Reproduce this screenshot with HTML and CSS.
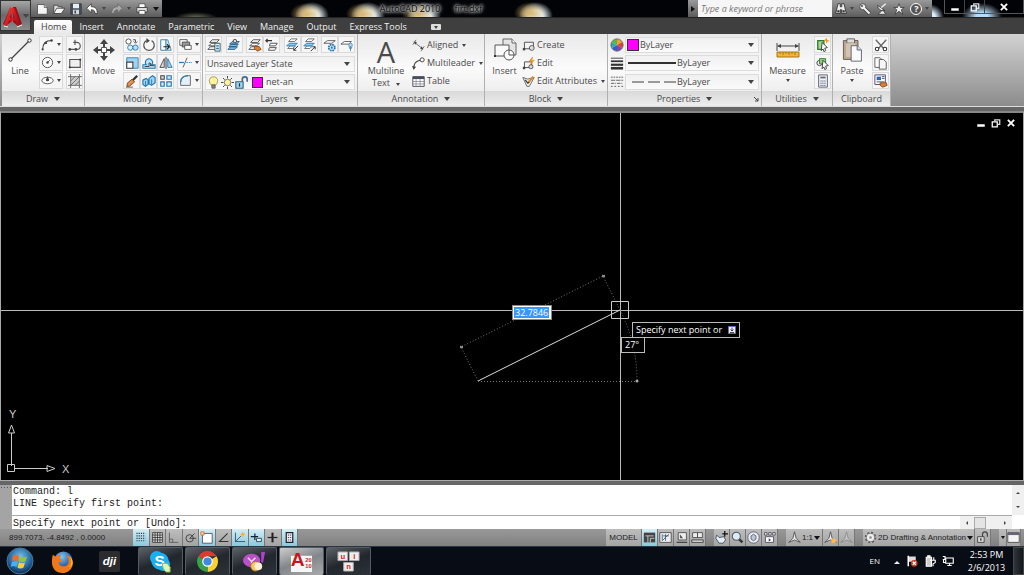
FILE: index.html
```html
<!DOCTYPE html>
<html lang="en">
<head>
    <meta charset="UTF-8">
    <meta name="viewport" content="width=device-width, initial-scale=1.0">
    <title>AutoCAD 2010 - firt.dxf</title>
    <link rel="stylesheet" href="styles.css">
</head>
<body>
    <!-- Shared icons -->
    <svg class="sprite" aria-hidden="true">
        <defs>
            <linearGradient id="red" x1="0" y1="0" x2="1" y2="1"><stop offset="0" stop-color="#ff5a50"/><stop offset=".5" stop-color="#d81820"/><stop offset="1" stop-color="#8c0a10"/></linearGradient>
            <radialGradient id="orb" cx=".5" cy=".35" r=".65"><stop offset="0" stop-color="#7cc4ea"/><stop offset=".6" stop-color="#2a6ea8"/><stop offset="1" stop-color="#0c2c54"/></radialGradient>
            <radialGradient id="globe" cx=".4" cy=".3" r=".7"><stop offset="0" stop-color="#7cc8f4"/><stop offset="1" stop-color="#123a88"/></radialGradient>
        </defs>
        <symbol id="i-new" viewBox="0 0 16 16"><path d="M2 2h9l4 4v9H2z" fill="#f4f4f4" stroke="#444"/><path d="M11 2v4h4" fill="#ccc" stroke="#555"/></symbol>
        <symbol id="i-open" viewBox="0 0 16 16"><path d="M1 13V3h5l1 2h5v3" fill="#ddd" stroke="#333"/><path d="M1 14l4-7h11l-5 7z" fill="#f4f4f4" stroke="#333"/></symbol>
        <symbol id="i-save" viewBox="0 0 16 16"><path d="M1 1h14v14H1z" fill="#46505c" stroke="#30363e"/><path d="M4 1h8v6H4z" fill="#e8edf2"/><path d="M4 9h8v6H4z" fill="#cfd6de"/><path d="M6 10h2v4H6z" fill="#444"/></symbol>
        <symbol id="i-undo" viewBox="0 0 16 16"><path d="M1 7l6-6v4c6 0 8 3 8 9h-3c0-3-1-5-5-5v4z" fill="#fff" stroke="#333"/></symbol>
        <symbol id="i-redo" viewBox="0 0 16 16"><path d="M15 7l-6-6v4c-6 0-8 3-8 9h3c0-3 1-5 5-5v4z" fill="#aaa" stroke="#666"/></symbol>
        <symbol id="i-print" viewBox="0 0 16 16"><path d="M4 1h8v5H4z" fill="#fff" stroke="#444"/><path d="M1 6h14v6H1z" fill="#ddd" stroke="#333"/><path d="M4 10h8v5H4z" fill="#fff" stroke="#444"/></symbol>
        <symbol id="i-bino" viewBox="0 0 16 16"><path d="M4 1h3v4h2V1h3l3 13H9V9H7v5H1z" fill="#eee" stroke="#222"/><path d="M3 11h3M10 11h3" stroke="#333" stroke-width="3"/></symbol>
        <symbol id="i-key" viewBox="0 0 16 16"><path d="M6 6l8 8" stroke="#333" stroke-width="5"/><circle cx="5" cy="5" r="4" fill="#eee" stroke="#333"/><path d="M6 6l8 8" stroke="#eee" stroke-width="3"/><circle cx="4" cy="4" r="1.400" fill="#555"/></symbol>
        <symbol id="i-dish" viewBox="0 0 16 16"><path d="M2 3c1 6 5 8 10 7zM3 15h10l-4-6z" fill="#eee" stroke="#333"/><path d="M7 6l6-5" stroke="#eee" stroke-width="2"/></symbol>
        <symbol id="i-star" viewBox="0 0 16 16"><path d="M8 1l2 5h5l-4 3 2 6-5-4-5 4 2-6-4-3h5z" fill="#eee" stroke="#333"/></symbol>
        <symbol id="i-min" viewBox="0 0 16 16"><path d="M2 12h12" stroke="#fff" stroke-width="4"/></symbol>
        <symbol id="i-restore" viewBox="0 0 16 16"><path d="M6 5V3h8v7h-3" fill="none" stroke="#ddd" stroke-width="2"/><path d="M2 6h8v8H2z" fill="none" stroke="#fff" stroke-width="2"/></symbol>
        <symbol id="i-close" viewBox="0 0 16 16"><path d="M3 3l10 10M13 3L3 13" stroke="#fff" stroke-width="3"/></symbol>

        <symbol id="i-line" viewBox="0 0 24 24"><path d="M3 21L21 3" stroke="#444" stroke-width="1.200"/><circle cx="2.500" cy="21.500" r="1.700" fill="#fff" stroke="#333"/><circle cx="21.500" cy="2.500" r="1.700" fill="#fff" stroke="#333"/></symbol>
        <symbol id="i-arc" viewBox="0 0 16 16"><path d="M2 14C2 7 6 3 13 3" fill="none" stroke="#444" stroke-width="1.300"/><circle cx="2" cy="14" r="1.300" fill="#444"/><circle cx="6" cy="6" r="1.500" fill="#444"/><circle cx="13" cy="3" r="1.500" fill="#444"/></symbol>
        <symbol id="i-circle" viewBox="0 0 16 16"><circle cx="8" cy="8" r="6.300" fill="#fff" stroke="#555" stroke-width="1.200"/><path d="M8 8l3-3" stroke="#444"/><circle cx="8" cy="8" r="1.500" fill="#444"/></symbol>
        <symbol id="i-ellipse" viewBox="0 0 16 16"><ellipse cx="8" cy="8" rx="7" ry="4" fill="#fff" stroke="#555" stroke-width="1.200"/><circle cx="8" cy="7" r="2" fill="#444"/><path d="M8 3v3" stroke="#444"/></symbol>
        <symbol id="i-pline" viewBox="0 0 16 16"><path d="M1 13h9a4 4 0 0 0 0-8H6" fill="none" stroke="#555" stroke-width="1.300"/><path d="M8 2v6" stroke="#555" stroke-width="1.300"/><circle cx="2" cy="13" r="1.500" fill="#444"/><circle cx="9" cy="13" r="1.500" fill="#444"/></symbol>
        <symbol id="i-rect" viewBox="0 0 16 16"><path d="M2 4h12v9H2z" fill="#eee" stroke="#555" stroke-width="1.300"/><path d="M1 12h2v2H1zM13 3h2v2h-2z" fill="#333"/></symbol>
        <symbol id="i-hatch" viewBox="0 0 16 16"><path d="M3 3h10v10H3z" fill="#ccc"/><path d="M3 0v16M13 0v16M0 3h16M0 13h16M3 8l5-5M3 13L13 3M8 13l5-5" stroke="#666"/></symbol>
        <symbol id="i-move" viewBox="0 0 24 24"><path d="M12 1l4 5h-3v3h-2V6H8zM12 23l4-5h-3v-3h-2v3H8zM1 12l5-4v3h3v2H6v3zM23 12l-5-4v3h-3v2h3v3z" fill="#444"/><path d="M9.500 9.500h5v5h-5z" fill="#fff" stroke="#555"/></symbol>
        <symbol id="i-copy2" viewBox="0 0 16 16"><circle cx="4" cy="4" r="3" fill="#fff" stroke="#444"/><circle cx="6" cy="11" r="3" fill="#def" stroke="#27a"/><circle cx="12" cy="11" r="3" fill="#bdf" stroke="#27a"/><path d="M9 2h3v3M14 4l-2 2-2-2" fill="none" stroke="#444"/></symbol>
        <symbol id="i-rotate" viewBox="0 0 16 16"><path d="M11 3a6 6 0 1 1-6 0" fill="none" stroke="#555" stroke-width="1.400"/><path d="M5 0l4 3-4 3z" fill="#444"/></symbol>
        <symbol id="i-stretch" viewBox="0 0 16 16"><path d="M2 2h6v12H2z" fill="#fff" stroke="#27a"/><path d="M8 2h2l4 12H8z" fill="#cfeaf8" stroke="#48a"/><path d="M5 10h6M9 7l3 3-3 3" fill="none" stroke="#222" stroke-width="1.300"/></symbol>
        <symbol id="i-scale" viewBox="0 0 16 16"><path d="M2 2h13v12H2z" fill="#9fd4f2" stroke="#2f7eb0"/><path d="M2 7h7v7H2z" fill="#fff" stroke="#444" stroke-width="1.300"/></symbol>
        <symbol id="i-offset" viewBox="0 0 16 16"><path d="M1 14v-4h4a4 4 0 1 1 6 0h4v4z" fill="#bfe3f8" stroke="#27a" stroke-width="1.200"/><path d="M3 12h5V8a1.500 1.500 0 1 1 1 3h5" fill="none" stroke="#333"/></symbol>
        <symbol id="i-mirror" viewBox="0 0 16 16"><path d="M1 13L6 3v10z" fill="#ddd" stroke="#444"/><path d="M15 13L10 3v10z" fill="#9fd4f2" stroke="#27a"/><path d="M8 1v14" stroke="#222"/></symbol>
        <symbol id="i-erase" viewBox="0 0 16 16"><path d="M14 2L7 9" stroke="#333" stroke-width="2.500"/><path d="M8 6l3 3-6 5H2l1-4z" fill="#e09050" stroke="#7a4420"/><path d="M1 15h8" stroke="#555"/></symbol>
        <symbol id="i-explode" viewBox="0 0 16 16"><path d="M1 7l4-2 2 2v5l-3 2-3-2zM8 5l4-3 3 2v6l-4 3-3-2z" fill="#9fd4f2" stroke="#27a" stroke-width="1.300"/><path d="M11 6v6M4 8v5" stroke="#27a"/></symbol>
        <symbol id="i-array" viewBox="0 0 16 16"><path d="M2 2h4v4H2z" fill="#ddd" stroke="#444" stroke-width="1.200"/><path d="M9 2h5v4H9zM2 9h4v5H2zM9 9h5v5H9z" fill="#cfeaf8" stroke="#2878b0" stroke-width="1.300"/></symbol>
        <symbol id="i-order" viewBox="0 0 16 16"><path d="M1 2h9v7H1z" fill="#fff" stroke="#444"/><path d="M4 5h9v6H4z" fill="#999" stroke="#444"/><path d="M7 9h8v5H7z" fill="#fff" stroke="#444"/></symbol>
        <symbol id="i-trim" viewBox="0 0 16 16"><path d="M0 8h6" stroke="#2878b0" stroke-width="1.500"/><path d="M9 8h7" stroke="#2878b0" stroke-dasharray="2 1"/><path d="M10 2L5 14" stroke="#444"/></symbol>
        <symbol id="i-fillet" viewBox="0 0 16 16"><path d="M2 14V10C2 5 6 2 14 2v12z" fill="#e4f0f6" stroke="#555"/><path d="M2 10C2 5 6 2 11 2" fill="none" stroke="#2878b0" stroke-width="1.600"/></symbol>

        <symbol id="i-lay" viewBox="0 0 16 16"><path d="M3 5l3-3h8l-3 3zM2 9l3-3h8l-3 3zM1 13l3-3h8l-3 3z" fill="#fff" stroke="#444"/></symbol>
        <symbol id="i-lay-blue" viewBox="0 0 16 16"><path d="M3 7l3-3h8l-3 3zM2 10l3-3h8l-3 3zM1 13l3-3h8l-3 3z" fill="#7cc0ea" stroke="#2a5a80"/><circle cx="9" cy="3.500" r="2" fill="#ddd" stroke="#444"/></symbol>
        <symbol id="i-lay-prop" viewBox="0 0 16 16"><use href="#i-lay"/><path d="M9 6h6v9H9z" fill="#e8f4fb" stroke="#355"/><path d="M10.500 9h3M10.500 12h3" stroke="#27a" stroke-width="1.500"/></symbol>
        <symbol id="i-lay-match" viewBox="0 0 16 16"><use href="#i-lay"/><path d="M8 9l5 1 2 3-4 2-4-3z" fill="#d8803c" stroke="#8a4a18"/></symbol>
        <symbol id="i-lay-prev" viewBox="0 0 16 16"><path d="M6 6h8l-2 3H5zM5 11h8l-2 3H4z" fill="#fff" stroke="#444"/><path d="M1 3h7M3 1L1 3l2 2" fill="none" stroke="#333" stroke-width="1.300"/></symbol>
        <symbol id="i-lay-iso" viewBox="0 0 16 16"><path d="M4 4l3-3h7l-3 3zM3 12l3-3h6l-3 3z" fill="#fff" stroke="#666"/><path d="M2 9l3-3h9l-3 3z" fill="#8ccbf0" stroke="#2878b0"/><path d="M15 9l-5 5M10 11v3h3" fill="none" stroke="#222"/></symbol>
        <symbol id="i-lay-uniso" viewBox="0 0 16 16"><path d="M4 4l3-3h7l-3 3zM3 12l3-3h6l-3 3z" fill="#fff" stroke="#666"/><path d="M2 9l3-3h9l-3 3z" fill="#8ccbf0" stroke="#2878b0"/><path d="M10 15l5-5M12 10h3v3" fill="none" stroke="#222"/></symbol>
        <symbol id="i-lay-freeze" viewBox="0 0 16 16"><path d="M1 6l4-3h9l-4 3z" fill="#fff" stroke="#555"/><circle cx="10" cy="11" r="3.500" fill="#cfeaf8" stroke="#2878b0" stroke-width="2" stroke-dasharray="2 .75"/><circle cx="10" cy="11" r="1.200" fill="#2878b0"/></symbol>
        <symbol id="i-lay-off" viewBox="0 0 16 16"><path d="M1 7l4-3h8l-3 3z" fill="#fff" stroke="#555"/><path d="M12 15V9M10 8a2 2 0 1 1 4 0l-1 4h-2z" fill="#bfe3f8" stroke="#4a88b8"/></symbol>
        <symbol id="i-bulb" viewBox="0 0 16 16"><path d="M5 11C1 6 3 1 8 1s7 5 3 10z" fill="#fff3a0" stroke="#9a8a40"/><path d="M6 11h4v4H6z" fill="#888" stroke="#555"/></symbol>
        <symbol id="i-sun" viewBox="0 0 16 16"><path d="M8 0v3M8 13v3M0 8h3M13 8h3M2.500 2.500l2 2M11.500 11.500l2 2M13.500 2.500l-2 2M2.500 13.500l2-2" stroke="#444" stroke-width="1.200"/><circle cx="8" cy="8" r="4" fill="#fff3a0" stroke="#666"/></symbol>
        <symbol id="i-lock" viewBox="0 0 16 16"><path d="M1 7h9v8H1z" fill="#9ed4ee" stroke="#2a6080" stroke-width="1.300"/><path d="M9 7V4a3 3 0 0 1 6 0v3" fill="none" stroke="#3b6f90" stroke-width="2"/><path d="M5.500 9v4" stroke="#234" stroke-width="1.500"/></symbol>
        <symbol id="i-aligned" viewBox="0 0 16 16"><path d="M3 4l10 8M1 7l4-6M11 15l4-6" stroke="#555" fill="none"/><path d="M2 3l4 1-2 3zM14 13l-4-1 2-3z" fill="#444"/></symbol>
        <symbol id="i-mleader" viewBox="0 0 16 16"><path d="M2 14C2 8 5 5 10 4" fill="none" stroke="#444" stroke-width="1.300"/><path d="M0 11l2 5 3-4z" fill="#444"/><circle cx="12.500" cy="3.500" r="2.500" fill="#fff" stroke="#444" stroke-width="1.200"/></symbol>
        <symbol id="i-table" viewBox="0 0 16 16"><path d="M1 2h14v12H1z" fill="#fff" stroke="#334"/><path d="M1 2h14v3H1z" fill="#46505c"/><path d="M1 8h14M1 11h14M5 5v9M10 5v9" stroke="#889"/></symbol>
        <symbol id="i-insert" viewBox="0 0 24 24"><path d="M10 1h9l4 4v12H10z" fill="#e4e4e4" stroke="#666"/><path d="M19 1v4h4" fill="#fff" stroke="#666"/><path d="M2 7h14v11H2z" fill="#fafafa" stroke="#555"/><circle cx="16" cy="17" r="5" fill="#fff" stroke="#555"/><path d="M16 12v5h5" stroke="#555" fill="none"/><path d="M1 17h2v2H1z" fill="#333"/></symbol>
        <symbol id="i-create" viewBox="0 0 16 16"><path d="M3 4h11v8H3z" fill="#f4f4f4" stroke="#555" stroke-width="1.200"/><circle cx="12" cy="11" r="3" fill="#ddd" stroke="#444"/><path d="M1 11h3v3H1z" fill="#444"/></symbol>
        <symbol id="i-edit" viewBox="0 0 16 16"><path d="M3 6h9v7H3z" fill="#f4f4f4" stroke="#555" stroke-width="1.200"/><circle cx="11" cy="12" r="2.500" fill="#ddd" stroke="#444"/><path d="M1 12h3v3H1z" fill="#444"/><path d="M13 0l-4 5h3l-2 5 5-6h-3z" fill="#ffb020" stroke="#d07010" stroke-width=".6"/></symbol>
        <symbol id="i-attr" viewBox="0 0 16 16"><path d="M1 3l6 2 8-2-6 11H6z" fill="#eee" stroke="#555"/><path d="M14 2L7 10" stroke="#d88828" stroke-width="2.500"/><path d="M4 6l3 4 2-1" fill="none" stroke="#333" stroke-width="1.400"/></symbol>
        <symbol id="i-wheel" viewBox="0 0 16 16"><path d="M8 8V1a7 7 0 0 1 6 3.500z" fill="#f0a030"/><path d="M8 8l6-3.500a7 7 0 0 1 0 7z" fill="#e04030"/><path d="M8 8l6 3.500A7 7 0 0 1 8 15z" fill="#8a40b0"/><path d="M8 8v7a7 7 0 0 1-6-3.500z" fill="#3060d0"/><path d="M8 8l-6 3.500a7 7 0 0 1 0-7z" fill="#30a8b0"/><path d="M8 8L2 4.500A7 7 0 0 1 8 1z" fill="#58b840"/><circle cx="8" cy="8" r="7" fill="none" stroke="#666"/></symbol>
        <symbol id="i-weight" viewBox="0 0 16 16"><path d="M1 2.500h14" stroke="#333"/><path d="M1 6h14" stroke="#333" stroke-width="2"/><path d="M1 10h14" stroke="#333" stroke-width="2.500"/><path d="M1 14h14" stroke="#333" stroke-width="3"/></symbol>
        <symbol id="i-ltype" viewBox="0 0 16 16"><path d="M1 2.500h14" stroke="#555" stroke-dasharray="2 1"/><path d="M1 6h14" stroke="#555" stroke-dasharray="5 1"/><path d="M1 9.500h14" stroke="#555" stroke-dasharray="4 1 1 1"/><path d="M1 13h14" stroke="#555" stroke-dasharray="2 2"/></symbol>
        <symbol id="i-measure" viewBox="0 0 24 16"><path d="M1 1v8M23 1v8M2 4h20" stroke="#444"/><path d="M1 4l4-2v4zM23 4l-4-2v4z" fill="#444"/><path d="M1 10h22v5H1z" fill="#f2b632" stroke="#a87818"/><path d="M4 10v2M7 10v3M10 10v2M13 10v3M16 10v2M19 10v3" stroke="#a87818"/></symbol>
        <symbol id="i-qselect" viewBox="0 0 16 16"><path d="M2 3h7v10H2z" fill="#a4d890" stroke="#2c7a2c" stroke-width="1.500"/><path d="M7 5l6 6-3 .5 1 3-2 1-1-3-2 2z" fill="#fff" stroke="#333"/><path d="M12 0v6M9 3h6M10 1l4 4" stroke="#f09020"/></symbol>
        <symbol id="i-select" viewBox="0 0 16 16"><circle cx="4" cy="8" r="3" fill="none" stroke="#333"/><path d="M4 3h7v6H4z" fill="#90cc80" stroke="#2c7a2c"/><path d="M8 5l6 6-3 .5 1 3-2 1-1-3-2 2z" fill="#fff" stroke="#333"/></symbol>
        <symbol id="i-calc" viewBox="0 0 16 16"><path d="M3 1h10v14H3z" fill="#eef2f6" stroke="#556"/><path d="M5 3h6v2H5z" fill="#667"/><path d="M5 8h6M5 10.500h6M5 13h6" stroke="#556" stroke-dasharray="1.500 .7"/></symbol>
        <symbol id="i-paste" viewBox="0 0 24 28"><path d="M2 3h17v22H2z" fill="#b9a78e" stroke="#5d5144"/><path d="M6 1h9v5H6z" fill="#ddd" stroke="#555"/><path d="M5 6h11v16H5z" fill="#d2c5b0"/><path d="M11 9h7l5 5v13H11z" fill="#f8fafc" stroke="#556"/><path d="M18 9v5h5" fill="#c8dcea" stroke="#556"/></symbol>
        <symbol id="i-cut" viewBox="0 0 16 16"><path d="M2 2l9 10M14 2L5 12" stroke="#666" stroke-width="1.500"/><circle cx="3.500" cy="12.500" r="2" fill="#fff" stroke="#333" stroke-width="1.200"/><circle cx="12.500" cy="12.500" r="2" fill="#fff" stroke="#333" stroke-width="1.200"/></symbol>
        <symbol id="i-copy" viewBox="0 0 16 16"><path d="M1 2h6l3 3v8H1z" fill="#fff" stroke="#555"/><path d="M6 4h5l3 3v8H6z" fill="#f6f6f6" stroke="#555"/></symbol>
        <symbol id="i-matchp" viewBox="0 0 16 16"><path d="M1 1h12v11H1z" fill="#fff" stroke="#446"/><path d="M3 3h5v4H3z" fill="#2f68b8"/><path d="M9 3h3M9 5h3M3 9h9" stroke="#446"/><path d="M7 10l7 0 1 3-5 2-3-2z" fill="#d8803c" stroke="#8a4a18"/></symbol>

        <symbol id="s-snap" viewBox="0 0 16 16"><path d="M3 3h11M3 6h11M3 9h11M3 12h11" stroke="#345" stroke-width="1.500" stroke-dasharray="1.500 1.200"/></symbol>
        <symbol id="s-grid" viewBox="0 0 16 16"><path d="M2 2h12v12H2z" fill="#ddd" stroke="#333"/><path d="M5 2v12M8 2v12M11 2v12M2 5h12M2 8h12M2 11h12" stroke="#333"/></symbol>
        <symbol id="s-ortho" viewBox="0 0 16 16"><path d="M3 2v12h11M3 10h4v4" fill="none" stroke="#555"/></symbol>
        <symbol id="s-polar" viewBox="0 0 16 16"><circle cx="7" cy="9" r="4.500" fill="none" stroke="#333"/><path d="M7 9h8M7 9l6-6" stroke="#333"/></symbol>
        <symbol id="s-osnap" viewBox="0 0 16 16"><path d="M3 3h12v12H3z" fill="#fff" stroke="#445"/><path d="M1 1h4v4H1z" fill="#f8d0b0" stroke="#d07030"/></symbol>
        <symbol id="s-otrack" viewBox="0 0 16 16"><path d="M13 3L3 13h11" fill="none" stroke="#333" stroke-width="1.300"/></symbol>
        <symbol id="s-ducs" viewBox="0 0 16 16"><path d="M3 2v11h12M3 13l7-7" fill="none" stroke="#246"/><path d="M13 0l-4 5h3l-1 4 4-6h-3z" fill="#ffa820"/></symbol>
        <symbol id="s-dyn" viewBox="0 0 16 16"><path d="M6 3v8M1 7h9" stroke="#123" stroke-width="1.500"/><path d="M8 9h6v4H8z" fill="#def" stroke="#234"/></symbol>
        <symbol id="s-lwt" viewBox="0 0 16 16"><path d="M8 2v12" stroke="#222" stroke-width="2.500"/><path d="M2 8h12" stroke="#222" stroke-width="1.500"/></symbol>
        <symbol id="s-qp" viewBox="0 0 16 16"><path d="M4 2h8v12H4z" fill="#eef" stroke="#222" stroke-width="1.500"/><path d="M6 5h4M6 8h4M6 11h4" stroke="#222" stroke-dasharray="1.500 1"/></symbol>
        <symbol id="s-model" viewBox="0 0 16 16"><path d="M1 2h14v12H1z" fill="#444"/><path d="M3 6h10M6 14V6M9 14V9h5" fill="none" stroke="#ddd"/></symbol>
        <symbol id="s-layout" viewBox="0 0 16 16"><path d="M1 2h14v12H1z" fill="#eee" stroke="#444"/><path d="M4 4v8l8-8M5 6h7M8 4v8" stroke="#357" fill="none"/></symbol>
        <symbol id="s-qvl" viewBox="0 0 16 16"><path d="M4 2h10v9H4z" fill="#eee" stroke="#444"/><path d="M6 4l4 5H6z" fill="#555"/><path d="M2 14h13" stroke="#444" stroke-width="1.500"/></symbol>
        <symbol id="s-qvd" viewBox="0 0 16 16"><path d="M2 2h6v6H2zM8 2h6v6H8z" fill="#eee" stroke="#444"/><path d="M1 11h14v3H1z" fill="#ddd" stroke="#333"/></symbol>
        <symbol id="s-pan" viewBox="0 0 16 16"><path d="M2 5l3 3 6-1 2 4-3 4H5L1 9z" fill="#e6ecf2" stroke="#345"/><path d="M12 0v7M9 3.500h7" stroke="#111" stroke-width="1.500"/></symbol>
        <symbol id="s-zoom" viewBox="0 0 16 16"><path d="M9 9l5 5" stroke="#333" stroke-width="3"/><circle cx="6.500" cy="6.500" r="5" fill="#d8eef4" stroke="#556" stroke-width="1.300"/></symbol>
        <symbol id="s-steer" viewBox="0 0 16 16"><circle cx="8" cy="8" r="7" fill="#e8eef4" stroke="#556"/><path d="M5 6l3-2 3 2v4l-3 2-3-2z" fill="#bcc8d4" stroke="#556"/></symbol>
        <symbol id="s-motion" viewBox="0 0 16 16"><path d="M2 2h3v3H2zM7 2h3v3H7zM12 2h3v3h-3z" fill="#fff" stroke="#445"/><path d="M3 7h10v7H3z" fill="#fff" stroke="#445"/><path d="M7 9l3 2-3 2z" fill="#445"/></symbol>
        <symbol id="s-annot" viewBox="0 0 16 16"><path d="M8 1l2 8 5 5-7-3-7 3 5-5z" fill="#eee" stroke="#444"/></symbol>
        <symbol id="s-annot2" viewBox="0 0 16 16"><use href="#s-annot"/><circle cx="12" cy="12" r="3" fill="#ffb84c"/></symbol>
        <symbol id="s-gear" viewBox="0 0 16 16"><circle cx="8" cy="8" r="6" fill="#eee" stroke="#555" stroke-width="2" stroke-dasharray="2.500 2.210"/><circle cx="8" cy="8" r="5" fill="#eee" stroke="#666"/><circle cx="8" cy="8" r="1.500" fill="#888"/></symbol>
        <symbol id="s-lock" viewBox="0 0 16 16"><path d="M2 7h8v7H2z" fill="#ddd" stroke="#333"/><path d="M8 7V4a3 3 0 0 1 6 0v3" fill="none" stroke="#444" stroke-width="1.500"/><path d="M6 9v3" stroke="#222" stroke-width="1.500"/></symbol>
        <symbol id="s-clean" viewBox="0 0 16 16"><path d="M1 2h14v12H1z" fill="#f4f4f4" stroke="#444"/><path d="M1 2h14v3H1z" fill="#667"/></symbol>
    </svg>

    <header class="titlebar">
        <button class="app-button" aria-label="Application menu">
            <svg class="app-logo" viewBox="0 0 21 26"><path d="M11 4l3 0 6 17-4 2-5-4zM1 21l8-17 1 14-6 5z" fill="#96101a"/><text x="10" y="22" text-anchor="middle">A</text><path d="M2 23l4 1M15 24l5-2" stroke="#eee" stroke-width="1"/></svg>
            <span class="caret"></span>
        </button>
        <div class="quick">
            <button aria-label="New"><svg class="ic"><use href="#i-new"/></svg></button>
            <button aria-label="Open"><svg class="ic"><use href="#i-open"/></svg></button>
            <button aria-label="Save"><svg class="ic"><use href="#i-save"/></svg></button>
            <button aria-label="Undo"><svg class="ic"><use href="#i-undo"/></svg><span class="caret small"></span></button>
            <button aria-label="Redo"><svg class="ic"><use href="#i-redo"/></svg><span class="caret small"></span></button>
            <button aria-label="Print"><svg class="ic"><use href="#i-print"/></svg></button>
            <button aria-label="Customize"><span class="caret black"></span></button>
        </div>
        <div class="window-title"><span>AutoCAD 2010</span><span>firt.dxf</span></div>
        <div class="info">
            <button class="info-toggle" aria-label="Collapse search"></button>
            <input type="text" aria-label="Search" placeholder="Type a keyword or phrase">
            <button aria-label="Find"><svg class="ic"><use href="#i-bino"/></svg><span class="caret small"></span></button>
            <button aria-label="Subscription"><svg class="ic"><use href="#i-key"/></svg></button>
            <button aria-label="Communication"><svg class="ic"><use href="#i-dish"/></svg></button>
            <button aria-label="Favorites"><svg class="ic"><use href="#i-star"/></svg></button>
            <button aria-label="Help"><span class="help">?</span><span class="caret small"></span></button>
        </div>
        <div class="window-buttons">
            <button aria-label="Minimize"><svg class="ic tiny"><use href="#i-min"/></svg></button>
            <button aria-label="Restore"><svg class="ic tiny"><use href="#i-restore"/></svg></button>
            <button class="wide" aria-label="Close"><svg class="ic tiny"><use href="#i-close"/></svg></button>
        </div>
    </header>

    <nav class="tabs">
        <a href="#" class="tab active">Home</a>
        <a href="#" class="tab">Insert</a>
        <a href="#" class="tab">Annotate</a>
        <a href="#" class="tab">Parametric</a>
        <a href="#" class="tab">View</a>
        <a href="#" class="tab">Manage</a>
        <a href="#" class="tab">Output</a>
        <a href="#" class="tab">Express Tools</a>
        <button class="tab-min" aria-label="Minimize ribbon"><span class="caret small"></span></button>
    </nav>

    <div class="ribbon">
        <section class="panel draw">
            <div class="panel-body">
                <button class="big"><svg class="ic large"><use href="#i-line"/></svg>Line</button>
                <div class="tools">
                    <button class="tool split" aria-label="Arc"><svg class="ic"><use href="#i-arc"/></svg><span class="caret small"></span></button>
                    <button class="tool split" aria-label="Circle"><svg class="ic"><use href="#i-circle"/></svg><span class="caret small"></span></button>
                    <button class="tool split" aria-label="Ellipse"><svg class="ic"><use href="#i-ellipse"/></svg><span class="caret small"></span></button>
                </div>
                <div class="tools">
                    <button class="tool" aria-label="Polyline"><svg class="ic"><use href="#i-pline"/></svg></button>
                    <button class="tool" aria-label="Rectangle"><svg class="ic"><use href="#i-rect"/></svg></button>
                    <button class="tool" aria-label="Hatch"><svg class="ic"><use href="#i-hatch"/></svg></button>
                </div>
            </div>
            <button class="panel-title">Draw<span class="caret"></span></button>
        </section>

        <section class="panel modify">
            <div class="panel-body">
                <button class="big"><svg class="ic large"><use href="#i-move"/></svg>Move</button>
                <div class="tools three">
                    <button class="tool" aria-label="Copy"><svg class="ic"><use href="#i-copy2"/></svg></button>
                    <button class="tool" aria-label="Rotate"><svg class="ic"><use href="#i-rotate"/></svg></button>
                    <button class="tool" aria-label="Stretch"><svg class="ic"><use href="#i-stretch"/></svg></button>
                    <button class="tool" aria-label="Scale"><svg class="ic"><use href="#i-scale"/></svg></button>
                    <button class="tool" aria-label="Offset"><svg class="ic"><use href="#i-offset"/></svg></button>
                    <button class="tool" aria-label="Mirror"><svg class="ic"><use href="#i-mirror"/></svg></button>
                    <button class="tool" aria-label="Erase"><svg class="ic"><use href="#i-erase"/></svg></button>
                    <button class="tool" aria-label="Explode"><svg class="ic"><use href="#i-explode"/></svg></button>
                    <button class="tool" aria-label="Array"><svg class="ic"><use href="#i-array"/></svg></button>
                </div>
                <div class="tools">
                    <button class="tool split" aria-label="Draw order"><svg class="ic"><use href="#i-order"/></svg><span class="caret small"></span></button>
                    <button class="tool split" aria-label="Trim"><svg class="ic"><use href="#i-trim"/></svg><span class="caret small"></span></button>
                    <button class="tool split" aria-label="Fillet"><svg class="ic"><use href="#i-fillet"/></svg><span class="caret small"></span></button>
                </div>
            </div>
            <button class="panel-title">Modify<span class="caret"></span></button>
        </section>

        <section class="panel layers">
            <div class="panel-body stack">
                <div class="layer-tools">
                    <button class="tool" aria-label="Layer properties"><svg class="ic"><use href="#i-lay-prop"/></svg></button>
                    <button class="tool" aria-label="Make current"><svg class="ic"><use href="#i-lay-blue"/></svg></button>
                    <div class="pair">
                        <button class="tool" aria-label="Match"><svg class="ic"><use href="#i-lay-match"/></svg></button>
                        <button class="tool" aria-label="Previous"><svg class="ic"><use href="#i-lay-prev"/></svg></button>
                    </div>
                    <div class="pair">
                        <button class="tool" aria-label="Isolate"><svg class="ic"><use href="#i-lay-iso"/></svg></button>
                        <button class="tool" aria-label="Unisolate"><svg class="ic"><use href="#i-lay-uniso"/></svg></button>
                    </div>
                    <div class="pair">
                        <button class="tool" aria-label="Freeze"><svg class="ic"><use href="#i-lay-freeze"/></svg></button>
                        <button class="tool" aria-label="Off"><svg class="ic"><use href="#i-lay-off"/></svg></button>
                    </div>
                </div>
                <div class="combo"><select aria-label="Layer state"><option>Unsaved Layer State</option></select></div>
                <div class="combo">
                    <svg class="ic"><use href="#i-bulb"/></svg><svg class="ic"><use href="#i-sun"/></svg><svg class="ic"><use href="#i-lock"/></svg>
                    <span class="swatch"></span>
                    <select aria-label="Layer"><option>net-an</option></select>
                </div>
            </div>
            <button class="panel-title">Layers<span class="caret"></span></button>
        </section>

        <section class="panel annotation">
            <div class="panel-body">
                <button class="big"><span class="letter">A</span>Multiline<span class="row">Text<span class="caret small"></span></span></button>
                <div class="list">
                    <button><svg class="ic"><use href="#i-aligned"/></svg>Aligned<span class="caret small"></span></button>
                    <button><svg class="ic"><use href="#i-mleader"/></svg>Multileader<span class="caret small"></span></button>
                    <button><svg class="ic"><use href="#i-table"/></svg>Table</button>
                </div>
            </div>
            <button class="panel-title">Annotation<span class="caret"></span></button>
        </section>

        <section class="panel block">
            <div class="panel-body">
                <button class="big"><svg class="ic large"><use href="#i-insert"/></svg>Insert</button>
                <div class="list">
                    <button><svg class="ic"><use href="#i-create"/></svg>Create</button>
                    <button><svg class="ic"><use href="#i-edit"/></svg>Edit</button>
                    <button><svg class="ic"><use href="#i-attr"/></svg>Edit Attributes<span class="caret small"></span></button>
                </div>
            </div>
            <button class="panel-title">Block<span class="caret"></span></button>
        </section>

        <section class="panel properties">
            <div class="panel-body stack">
                <div class="prop"><svg class="ic"><use href="#i-wheel"/></svg><div class="combo"><span class="swatch"></span><select aria-label="Color"><option>ByLayer</option></select></div></div>
                <div class="prop"><svg class="ic"><use href="#i-weight"/></svg><div class="combo"><span class="sample"></span><select aria-label="Lineweight"><option>ByLayer</option></select></div></div>
                <div class="prop"><svg class="ic"><use href="#i-ltype"/></svg><div class="combo"><span class="sample dashed"></span><select aria-label="Linetype"><option>ByLayer</option></select></div></div>
            </div>
            <button class="panel-title">Properties<span class="caret"></span><svg class="launcher" viewBox="0 0 6 6"><path d="M1 1l4 4M5 2v3H2" fill="none" stroke="#444"/></svg></button>
        </section>

        <section class="panel utilities">
            <div class="panel-body">
                <button class="big"><svg class="ic large"><use href="#i-measure"/></svg>Measure<span class="caret small"></span></button>
                <div class="tools">
                    <button class="tool" aria-label="Quick select"><svg class="ic"><use href="#i-qselect"/></svg></button>
                    <button class="tool" aria-label="Select all"><svg class="ic"><use href="#i-select"/></svg></button>
                    <button class="tool" aria-label="Calculator"><svg class="ic"><use href="#i-calc"/></svg></button>
                </div>
            </div>
            <button class="panel-title">Utilities<span class="caret"></span></button>
        </section>

        <section class="panel clipboard">
            <div class="panel-body">
                <button class="big"><svg class="ic large"><use href="#i-paste"/></svg>Paste<span class="caret small"></span></button>
                <div class="tools">
                    <button class="tool" aria-label="Cut"><svg class="ic"><use href="#i-cut"/></svg></button>
                    <button class="tool" aria-label="Copy clip"><svg class="ic"><use href="#i-copy"/></svg></button>
                    <button class="tool" aria-label="Match properties"><svg class="ic"><use href="#i-matchp"/></svg></button>
                </div>
            </div>
            <button class="panel-title">Clipboard</button>
        </section>
    </div>

    <main class="drawing">
        <div class="doc-buttons">
            <button aria-label="Minimize drawing"><svg class="ic tiny"><use href="#i-min"/></svg></button>
            <button aria-label="Restore drawing"><svg class="ic tiny"><use href="#i-restore"/></svg></button>
            <button aria-label="Close drawing"><svg class="ic tiny"><use href="#i-close"/></svg></button>
        </div>
        <div class="cross-v"></div>
        <div class="cross-h"></div>
        <!-- line being drawn, with its length and angle dimensions -->
        <svg class="sketch" viewBox="0 0 190 120">
            <path d="M23 110L165 39" stroke="#ddd" stroke-width="1"/>
            <path d="M23 110L6 76L148 5L165 39M23 110.500H182M165 39Q182 72 182 110" fill="none" stroke="#777" stroke-dasharray="1 2"/>
            <path d="M5 75l3 2M8 75l-3 2M147 4l3 2M150 4l-3 2" stroke="#aaa"/>
            <circle cx="182" cy="110" r="1.500" fill="#aaa"/>
            <path d="M156.500 30.500h17v17h-17z" fill="none" stroke="#ccc"/>
        </svg>
        <input class="dyn-length" type="text" aria-label="Length" value="32.7846">
        <div class="dyn-prompt">Specify next point or <svg class="ic key" viewBox="0 0 16 16"><path d="M1 1h14v14H1z" fill="#eef" stroke="#66b" stroke-width="2"/><path d="M8 3v7M5 7l3 3 3-3M4 13h8" fill="none" stroke="#111" stroke-width="1.500"/></svg></div>
        <div class="dyn-angle">27°</div>
        <svg class="ucs" viewBox="0 0 70 75">
            <path d="M6.500 61V28M10 63.500h33M2.500 59.500h7v7h-7zM6.500 20l3 8h-6zM50 63.500l-8-3v6z" fill="none" stroke="#ccc"/>
            <text x="4" y="13">Y</text><text x="57" y="68">X</text>
        </svg>
    </main>

    <section class="command">
        <div class="grip"></div>
        <div class="command-text">
            <div class="history">Command: l<br>LINE Specify first point:</div>
            <div class="prompt-row">
                <label for="cmd">Specify next point or [Undo]:</label>
                <input id="cmd" type="text">
                <div class="scroll-h"><span class="arrow left"></span><span class="thumb"></span><span class="arrow right"></span></div>
            </div>
        </div>
        <div class="scroll-v"><span class="arrow up"></span><span class="arrow down"></span></div>
    </section>

    <footer class="status">
        <span class="coords">899.7073, -4.8492 , 0.0000</span>
        <div class="toggles">
            <button class="on" aria-label="Snap"><svg class="ic"><use href="#s-snap"/></svg></button>
            <button aria-label="Grid"><svg class="ic"><use href="#s-grid"/></svg></button>
            <button aria-label="Ortho"><svg class="ic"><use href="#s-ortho"/></svg></button>
            <button aria-label="Polar"><svg class="ic"><use href="#s-polar"/></svg></button>
            <button class="on" aria-label="Object snap"><svg class="ic"><use href="#s-osnap"/></svg></button>
            <button aria-label="Tracking"><svg class="ic"><use href="#s-otrack"/></svg></button>
            <button class="on" aria-label="Dynamic UCS"><svg class="ic"><use href="#s-ducs"/></svg></button>
            <button class="on" aria-label="Dynamic input"><svg class="ic"><use href="#s-dyn"/></svg></button>
            <button aria-label="Lineweight"><svg class="ic"><use href="#s-lwt"/></svg></button>
            <button class="on" aria-label="Quick properties"><svg class="ic"><use href="#s-qp"/></svg></button>
        </div>
        <div class="status-right">
            <div class="group">
                <button class="model">MODEL</button>
                <button class="on" aria-label="Model"><svg class="ic"><use href="#s-model"/></svg></button>
                <button aria-label="Layout"><svg class="ic"><use href="#s-layout"/></svg></button>
                <button aria-label="Quick view layouts"><svg class="ic"><use href="#s-qvl"/></svg></button>
                <button aria-label="Quick view drawings"><svg class="ic"><use href="#s-qvd"/></svg></button>
            </div>
            <div class="group">
                <button aria-label="Pan"><svg class="ic"><use href="#s-pan"/></svg></button>
                <button aria-label="Zoom"><svg class="ic"><use href="#s-zoom"/></svg></button>
                <button aria-label="Steering wheel"><svg class="ic"><use href="#s-steer"/></svg></button>
                <button aria-label="Show motion"><svg class="ic"><use href="#s-motion"/></svg></button>
            </div>
            <div class="group">
                <button class="scale"><svg class="ic"><use href="#s-annot"/></svg>1:1<span class="caret black"></span></button>
                <button aria-label="Annotation visibility"><svg class="ic"><use href="#s-annot2"/></svg></button>
                <button class="dim" aria-label="Auto scale"><svg class="ic"><use href="#s-annot"/></svg></button>
            </div>
            <div class="group">
                <button class="workspace"><svg class="ic"><use href="#s-gear"/></svg>2D Drafting &amp; Annotation<span class="caret black"></span></button>
                <button aria-label="Lock"><svg class="ic"><use href="#s-lock"/></svg></button>
            </div>
            <div class="group">
                <button class="narrow" aria-label="Status menu"><span class="caret black small"></span></button>
                <button class="clean" aria-label="Clean screen"><svg class="ic"><use href="#s-clean"/></svg></button>
            </div>
        </div>
    </footer>

    <div class="taskbar">
        <button class="start" aria-label="Start"><svg viewBox="0 0 28 28"><circle cx="14" cy="14" r="13" fill="url(#orb)" stroke="#4a7894"/><path d="M7 9q3-2 6 0l-1 5q-3-1.500-6 0z" fill="#f06a28"/><path d="M14 9.500q3 2 7 0l-1.500 5q-3 1.500-6.500 0z" fill="#8cc83c"/><path d="M6 15q3-1.500 6 0l-1.500 5q-3-2-6 0z" fill="#4cb0f0"/><path d="M13 15.500q3 1.500 6 0l-1.500 5q-3 2-6 0z" fill="#fccf30"/></svg></button>
        <button class="task" aria-label="Firefox"><svg viewBox="0 0 24 24"><circle cx="13" cy="11" r="9.500" fill="url(#globe)"/><path d="M2 5l3 2c2-2 4-2 6-1-2 1-2 2-2 3l3 1c-1 3-4 2-4 4 2 4 8 4 10 0 1-3 0-6-2-9 5 2 7 6 7 9-1 7-6 10-11 10C5 24 1 19 1 13c0-3 0-5 1-8z" fill="#f07818"/><path d="M19 6c3 4 3 9 0 12 4-1 5-8 0-12z" fill="#ffc830"/></svg></button>
        <button class="task" aria-label="DJI"><svg viewBox="0 0 24 24"><rect x="1" y="1" width="22" height="22" rx="2" fill="#2c2c2e"/><text x="12" y="16" text-anchor="middle" class="dji">dji</text></svg></button>
        <button class="task open first" aria-label="Skype"><svg viewBox="0 0 24 24"><circle cx="8" cy="8" r="7" fill="#1ab0f0"/><circle cx="15" cy="15" r="7" fill="#1ab0f0"/><circle cx="11.500" cy="11.500" r="9" fill="#1ab0f0"/><text x="11" y="17" text-anchor="middle" class="skype">S</text><path d="M14 14l5 0 3 4v5h-4c-3-2-4-5-4-9z" fill="#dff4c0" stroke="#86c040"/></svg></button>
        <button class="task open" aria-label="Chrome"><svg viewBox="0 0 24 24"><path d="M12 12L2.500 6.500A11 11 0 0 1 21.500 6.500H12z" fill="#e03a30"/><path d="M12 12L21.500 6.500A11 11 0 0 1 12 23z" fill="#fcd030"/><path d="M12 12v11A11 11 0 0 1 2.500 6.500z" fill="#38a048"/><circle cx="12" cy="12" r="5.500" fill="#fff"/><circle cx="12" cy="12" r="4.300" fill="#4088e0"/></svg></button>
        <button class="task open" aria-label="Messenger"><svg viewBox="0 0 24 24"><ellipse cx="9" cy="11" rx="9" ry="7" fill="#b850c8"/><path d="M5 8l4 4 4-4M9 12v3" stroke="#f0d8f4" stroke-width="1.500" fill="none"/><path d="M19 2h4l-2 11h-2z" fill="#b040d0"/><circle cx="13" cy="17" r="5" fill="#f8c860" stroke="#a87020"/><circle cx="16" cy="17" r="4" fill="#fff0dc"/></svg></button>
        <button class="task open current" aria-label="AutoCAD"><svg viewBox="0 0 24 24"><path d="M1 6h22v17H1z" fill="#f6f6f6"/><text x="8" y="17" text-anchor="middle" class="task-a">A</text><text x="16" y="12" class="task-year">20</text><text x="16" y="19" class="task-year">10</text></svg></button>
        <button class="task open" aria-label="Unikey"><svg viewBox="0 0 24 24"><path d="M1 2h10v9H1zM13 2h10v9H13zM7 13h10v9H7z" fill="#eee" stroke="#aaa"/><text x="6" y="9" text-anchor="middle" class="cube">u</text><text x="18" y="9" text-anchor="middle" class="cube">i</text><text x="12" y="20" text-anchor="middle" class="cube">n</text></svg></button>
        <div class="tray">
            <span class="lang">EN</span>
            <span class="arrow up light"></span>
            <svg class="ic" viewBox="0 0 16 16"><path d="M3 1v14" stroke="#fff" stroke-width="2"/><path d="M4 2h9v7H4z" fill="#ddd"/><circle cx="11" cy="11" r="4.500" fill="#d83028"/><path d="M9 9l4 4M13 9l-4 4" stroke="#fff" stroke-width="1.500"/></svg>
            <svg class="ic" viewBox="0 0 16 16"><path d="M3 3h7v12H3zM5 1h3v2H5z" fill="#ccc" stroke="#fff" stroke-width="1.500"/><path d="M8 7h7v3l-3 2v3M10 7V3M13 7V3" fill="none" stroke="#fff" stroke-width="1.500"/></svg>
            <svg class="ic" viewBox="0 0 16 16"><path d="M5 4h10v7H5zM7 14h6M10 11v3M1 2h3v4H1M2 6v4h3" fill="none" stroke="#fff" stroke-width="1.500"/></svg>
            <div class="clock">2:53 PM<br>2/6/2013</div>
        </div>
        <button class="show-desktop" aria-label="Show desktop"></button>
    </div>
</body>
</html>
```
FILE: styles.css
```css
* { box-sizing: border-box; }
body {
    margin: 0;
    height: 100vh;
    display: flex;
    flex-direction: column;
    overflow: hidden;
    background: #000;
    color: #4a4a4a;
    font-family: "Open Sans", "Noto Sans", sans-serif;
    font-size: 9px;
    line-height: 12px;
}
button, input, select { font: inherit; color: inherit; margin: 0; padding: 0; border: 0; background: none; }
button { display: flex; align-items: center; justify-content: center; white-space: nowrap; }
.sprite { position: absolute; width: 0; height: 0; }
.ic { width: 14px; height: 14px; flex: none; }
.ic.large { width: 24px; height: 24px; }
.ic.tiny { width: 10px; height: 10px; }
.caret { border: 3px solid transparent; border-top: 4px solid #444; border-bottom: 0; flex: none; }
.caret.small { border-width: 2px; border-top-width: 3px; border-bottom: 0; }
.caret.black { border-top-color: #111; }

/* Title bar */
.titlebar {
    height: 18px;
    flex: none;
    display: flex;
    border-bottom: 1px solid #222;
    background:
        radial-gradient(ellipse 22px 6px at 196px 18px, #6d7a58, transparent),
        radial-gradient(ellipse 16px 11px at 306px 14px, #d8b468, transparent),
        radial-gradient(ellipse 17px 14px at 312px 16px, #e8f4fa 40%, transparent),
        radial-gradient(ellipse 16px 11px at 362px 14px, #d8b468, transparent),
        radial-gradient(ellipse 17px 14px at 368px 16px, #e8f4fa 40%, transparent),
        radial-gradient(ellipse 16px 11px at 418px 14px, #d8b468, transparent),
        radial-gradient(ellipse 17px 14px at 424px 16px, #e8f4fa 40%, transparent),
        radial-gradient(ellipse 16px 11px at 530px 13px, #d8b468, transparent),
        radial-gradient(ellipse 17px 14px at 536px 16px, #e8f4fa 40%, transparent),
        radial-gradient(ellipse 14px 14px at 930px 18px, #d8ecfa 40%, transparent),
        radial-gradient(ellipse 20px 14px at 982px 17px, #b8dcf8 30%, transparent),
        #020306;
}
.app-button {
    width: 31px;
    height: 31px;
    flex: none;
    z-index: 1;
    border: 1px solid #333;
    background: linear-gradient(#a6a6a6, #6a6a6a 50%, #8c8c8c);
}
.app-logo { width: 21px; height: 26px; }
.app-logo text { fill: url(#red); font: bold 24px "Liberation Sans", sans-serif; }
.quick {
    width: 131px;
    flex: none;
    display: flex;
    align-items: center;
    justify-content: space-between;
    padding: 0 3px 0 5px;
    background: linear-gradient(#999, #5c5c5c);
}
.quick button { gap: 4px; }
.quick .ic, .info .ic { width: 12px; height: 12px; }
.window-title {
    flex: 1;
    display: flex;
    justify-content: center;
    align-items: center;
    gap: 14px;
    padding-left: 12px;
    color: #050505;
    text-shadow: 0 0 2px #ccc, 0 0 3px #bbb, 0 0 4px #aaa, 0 0 5px #999;
}
.info { display: flex; width: 244px; flex: none; background: linear-gradient(#999, #5c5c5c); }
.info button { flex: 1 1 auto; gap: 3px; }
.info input { width: 134px; flex: none; padding-left: 3px; background: #f6f6f6; font-style: italic; }
.info input::placeholder { color: #777; opacity: 1; }
.info .info-toggle { width: 10px; flex: none; }
.info-toggle::after { content: ""; border: 3px solid transparent; border-left: 4px solid #111; border-right: 0; }
.help { width: 12px; height: 12px; border: 1px solid #fff; border-radius: 50%; background: #555; color: #fff; font-weight: bold; line-height: 10px; }
.window-buttons { display: flex; width: 80px; height: 14px; flex: none; margin-left: 12px; border: 1px solid #555; border-top: 0; }
.window-buttons button { flex: 2; border-right: 1px solid #444; }
.window-buttons .wide { flex: 4; border-right: 0; }

/* Ribbon tabs */
.tabs { height: 16px; flex: none; display: flex; align-items: stretch; padding: 2px 0 0 34px; background: #3f3f3f; }
.tab { padding: 0 6px 0 7px; line-height: 14px; color: #f0f0f0; text-decoration: none; }
.tab.active { border-radius: 2px 2px 0 0; background: linear-gradient(#fff, #e8e8e8); color: #444; }
.tab-min { width: 10px; height: 6px; margin: 4px 0 0 18px; border-radius: 1px; background: #ddd; }

/* Ribbon panels */
.ribbon {
    flex: none;
    display: flex;
    padding-left: 2px;
    border-bottom: 1px solid #ddd;
    background: linear-gradient(#d2d2d2, #8c8c8c);
}
.panel { flex: none; display: flex; flex-direction: column; border-right: 1px solid #b0b0b0; background: #f0f0f0; }
.draw { width: 83px; }
.modify { width: 118px; }
.layers { width: 155px; }
.annotation { width: 127px; }
.block { width: 123px; }
.properties { width: 154px; }
.utilities { width: 71px; }
.clipboard { width: 58px; }
.panel-body { height: 57px; display: flex; justify-content: space-between; padding: 2px 1px 1px 2px; background: linear-gradient(#e9e9e9, #fbfbfb 60%, #eee); }
.panel-body.stack { flex-direction: column; padding-right: 2px; }
.panel-title { position: relative; height: 15px; gap: 6px; background: linear-gradient(#d9d9d9, #eee); }
.launcher { position: absolute; right: 2px; bottom: 4px; width: 6px; height: 6px; }
.big { flex: 1; flex-direction: column; justify-content: flex-start; padding-top: 2px; }
.big .large { margin-bottom: 3px; }
.big .caret { margin-top: 2px; }
.big .row { display: flex; align-items: center; gap: 6px; }
.letter { height: 27px; font-size: 29px; line-height: 27px; }
.tools { display: grid; grid-auto-rows: 18px; margin-left: 3px; }
.tools.three { grid-template-columns: repeat(3, 17px); }
.tool { width: 17px; height: 17px; border: 1px solid #dadada; background: #f6f6f6; }
.tool.split { width: 24px; gap: 3px; }
.tool.split .ic { width: 13px; height: 13px; }
.layer-tools { display: flex; justify-content: space-between; }
.pair { display: flex; }
.combo { flex: 1; height: 16px; display: flex; align-items: center; padding: 0 4px 0 1px; border: 1px solid #dcdcdc; background: linear-gradient(#f0f0f0, #fafafa); }
.stack > .combo { flex: none; }
.combo::after { content: ""; border: 3px solid transparent; border-top: 4px solid #444; border-bottom: 0; }
.combo select { flex: 1; min-width: 0; appearance: none; line-height: 14px; }
.combo .ic { width: 13px; height: 13px; margin-right: 1px; }
.swatch { width: 12px; height: 12px; flex: none; margin: 0 1px 0 0; border: 1px solid #333; background: #f0f; }
.layers .combo .swatch { width: 11px; height: 11px; margin: 0 3px 0 3px; }
.prop { height: 17px; display: flex; align-items: center; gap: 1px; }
.sample { width: 48px; height: 2px; flex: none; margin: 0 1px; background: #333; }
.sample.dashed { background: repeating-linear-gradient(90deg, transparent 0 4px, #999 4px 16px); }
.list { display: grid; grid-template-rows: repeat(3, 18px); flex: none; }
.list button { justify-content: flex-start; gap: 2px; }
.list .ic { width: 13px; height: 13px; }
.list .caret { margin-left: 2px; }
.annotation .list { width: 71px; }
.block .list { width: 84px; }

/* Drawing area */
.drawing { position: relative; flex: 1; min-height: 0; margin-top: 4px; border: 1px solid #aaa; border-top: 2px solid #888; background: #000; outline: 4px solid #666; color: #fff; }
.doc-buttons { position: absolute; right: 7px; top: 5px; display: flex; gap: 5px; }
.cross-v { position: absolute; left: 619px; top: 0; bottom: 0; width: 1px; background: #bbb; }
.cross-h { position: absolute; top: 197px; left: 0; right: 0; height: 1px; background: #bbb; }
.sketch { position: absolute; left: 454px; top: 158px; width: 190px; height: 120px; }
.dyn-length { position: absolute; left: 511px; top: 192px; width: 40px; height: 15px; padding: 0 0 0 2px; border: 1px solid #888; background: linear-gradient(#3896ff, #3896ff) 1px 1px / 35px 11px no-repeat #fff; }
.dyn-prompt, .dyn-angle { position: absolute; border: 1px solid #bbb; background: #000; padding: 1px 3px; white-space: nowrap; }
.dyn-prompt { left: 631px; top: 209px; display: flex; align-items: center; gap: 6px; }
.dyn-angle { left: 620px; top: 224px; width: 24px; }
.key { width: 8px; height: 8px; }
.ucs { position: absolute; left: 4px; bottom: 0; width: 70px; height: 75px; }
.ucs text { fill: #ccc; font: 11px "Liberation Sans", sans-serif; }

/* Command line */
.command { position: relative; height: 48px; flex: none; display: flex; border-top: 4px solid #666; background: #fff; color: #222; font: 10px/12px "Liberation Mono", monospace; }
.grip { width: 12px; background: radial-gradient(#555 1px, transparent 1px) 0 1px / 3px 3px repeat-x, #a4a4a4; }
.command-text { flex: 1; display: flex; flex-direction: column; }
.history { flex: 1; padding: 1px; border-bottom: 1px solid #aaa; }
.prompt-row { height: 13px; display: flex; padding-left: 1px; line-height: 15px; }
.prompt-row input { flex: 1; }
.scroll-h { width: 52px; display: flex; align-items: center; justify-content: space-between; padding: 0 4px; background: #f0f0f0; }
.scroll-v { width: 12px; height: 30px; display: flex; flex-direction: column; align-items: center; justify-content: space-between; padding: 5px 0; background: #f0f0f0; }
.thumb { width: 12px; height: 12px; margin-right: 12px; border: 1px solid #aaa; background: #e4e4e4; }
.arrow { border: 2px solid transparent; }
.arrow.left { border-right-color: #444; }
.arrow.right { border-left-color: #444; }
.arrow.up { border-bottom-color: #444; }
.arrow.down { border-top-color: #444; }
.arrow.light { border-width: 3px; border-bottom-color: #eee; }

/* Status bar */
.status { height: 17px; flex: none; display: flex; background: linear-gradient(#999, #808080); color: #222; font: 8px/18px "Liberation Sans", sans-serif; }
.coords { width: 133px; padding-left: 9px; }
.toggles { width: 165px; display: flex; }
.toggles button { flex: 1; }
.status button { border-right: 1px solid #777; background: linear-gradient(#bdbdbd, #a4a4a4); }
.status button.on { background: linear-gradient(#d4eef6, #8cc8da); }
.status .ic { width: 13px; height: 13px; }
.status-right { margin-left: auto; display: flex; gap: 8px; padding-right: 3px; }
.group { display: flex; }
.group button { width: 16px; }
.group .model { width: 36px; }
.group .scale { width: 37px; gap: 1px; }
.group .workspace { width: 112px; gap: 1px; }
.group .narrow { width: 8px; }
.group .clean { width: 14px; }
.dim .ic { opacity: .4; }

/* Windows taskbar */
.taskbar { height: 29px; flex: none; display: flex; align-items: stretch; border-top: 1px solid #2a3644; background: #080c14; color: #fff; }
.start { width: 40px; }
.start svg { width: 28px; height: 28px; }
.task { width: 45px; margin-right: 2px; }
.task svg { width: 23px; height: 23px; }
.task.open { border: 1px solid #555b62; border-bottom: 0; border-radius: 2px; background: linear-gradient(160deg, #5c6268, #22272d 50%, #2c3238); }
.task.first { margin-left: 4px; }
.task.current { background: linear-gradient(160deg, #ccc, #82868a 50%, #aaa); }
.task text { font-family: "Liberation Sans", sans-serif; font-weight: bold; }
.dji { font-size: 12px; font-style: italic; fill: #fff; }
.skype { font-size: 16px; fill: #fff; }
.task-a { font-size: 20px; fill: #c41820; }
.task-year { font-size: 6px; fill: #d02020; }
.cube { font-size: 8px; fill: #d82020; }
.tray { margin-left: auto; display: flex; align-items: center; gap: 6px; }
.tray .ic { width: 12px; height: 12px; }
.lang { font-size: 8px; margin-right: 8px; }
.clock { width: 53px; text-align: center; line-height: 13px; }
.show-desktop { width: 11px; border: 1px solid #444; background: linear-gradient(90deg, #30353c, #11151b); }
```
